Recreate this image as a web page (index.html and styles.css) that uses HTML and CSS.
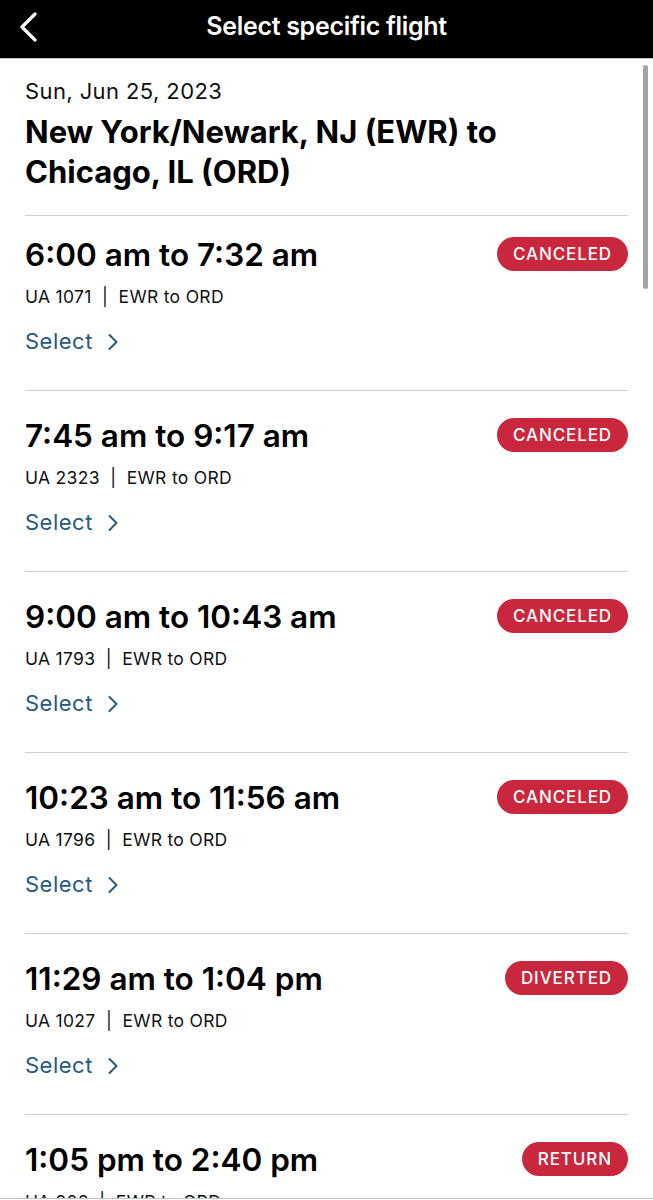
FILE: index.html
```html
<!DOCTYPE html>
<html lang="en">
<head>
<meta charset="utf-8">
<title>Select specific flight</title>
<link rel="stylesheet" href="styles.css">
</head>
<body>
<header class="topbar">
  <button class="back" aria-label="Back">
    <svg width="20" height="30" viewBox="0 0 20 30"><path d="M16 2 L3 15 L16 28" fill="none" stroke="#fff" stroke-width="3.2" stroke-linecap="round" stroke-linejoin="round"/></svg>
  </button>
  <h1 class="title">Select specific flight</h1>
</header>
<main class="content">
  <section class="intro">
    <div class="date">Sun, Jun 25, 2023</div>
    <h2 class="route">New York/Newark, NJ (EWR) to<br>Chicago, IL (ORD)</h2>
  </section>
  <ul class="flights">
    <li class="flight">
      <div class="row-top"><span class="time">6:00 am to 7:32 am</span><span class="badge">CANCELED</span></div>
      <div class="meta">UA 1071 &nbsp;|&nbsp; EWR to ORD</div>
      <a class="select">Select <svg class="chev" width="12" height="18" viewBox="0 0 12 18"><path d="M2.5 2 L9.5 9 L2.5 16" fill="none" stroke="currentColor" stroke-width="2" stroke-linecap="round" stroke-linejoin="round"/></svg></a>
    </li>
    <li class="flight">
      <div class="row-top"><span class="time">7:45 am to 9:17 am</span><span class="badge">CANCELED</span></div>
      <div class="meta">UA 2323 &nbsp;|&nbsp; EWR to ORD</div>
      <a class="select">Select <svg class="chev" width="12" height="18" viewBox="0 0 12 18"><path d="M2.5 2 L9.5 9 L2.5 16" fill="none" stroke="currentColor" stroke-width="2" stroke-linecap="round" stroke-linejoin="round"/></svg></a>
    </li>
    <li class="flight">
      <div class="row-top"><span class="time">9:00 am to 10:43 am</span><span class="badge">CANCELED</span></div>
      <div class="meta">UA 1793 &nbsp;|&nbsp; EWR to ORD</div>
      <a class="select">Select <svg class="chev" width="12" height="18" viewBox="0 0 12 18"><path d="M2.5 2 L9.5 9 L2.5 16" fill="none" stroke="currentColor" stroke-width="2" stroke-linecap="round" stroke-linejoin="round"/></svg></a>
    </li>
    <li class="flight">
      <div class="row-top"><span class="time">10:23 am to 11:56 am</span><span class="badge">CANCELED</span></div>
      <div class="meta">UA 1796 &nbsp;|&nbsp; EWR to ORD</div>
      <a class="select">Select <svg class="chev" width="12" height="18" viewBox="0 0 12 18"><path d="M2.5 2 L9.5 9 L2.5 16" fill="none" stroke="currentColor" stroke-width="2" stroke-linecap="round" stroke-linejoin="round"/></svg></a>
    </li>
    <li class="flight">
      <div class="row-top"><span class="time">11:29 am to 1:04 pm</span><span class="badge">DIVERTED</span></div>
      <div class="meta">UA 1027 &nbsp;|&nbsp; EWR to ORD</div>
      <a class="select">Select <svg class="chev" width="12" height="18" viewBox="0 0 12 18"><path d="M2.5 2 L9.5 9 L2.5 16" fill="none" stroke="currentColor" stroke-width="2" stroke-linecap="round" stroke-linejoin="round"/></svg></a>
    </li>
    <li class="flight">
      <div class="row-top"><span class="time">1:05 pm to 2:40 pm</span><span class="badge">RETURN</span></div>
      <div class="meta">UA 202 &nbsp;|&nbsp; EWR to ORD</div>
      <a class="select">Select <svg class="chev" width="12" height="18" viewBox="0 0 12 18"><path d="M2.5 2 L9.5 9 L2.5 16" fill="none" stroke="currentColor" stroke-width="2" stroke-linecap="round" stroke-linejoin="round"/></svg></a>
    </li>
  </ul>
</main>
<div class="scrollbar"></div>
<div class="bottombar"></div>
</body>
</html>
```
FILE: styles.css
```css
* { box-sizing: border-box; }
html, body { margin: 0; padding: 0; }
body {
  background: #fff;
  color: #000;
  font-family: Inter, "Liberation Sans", sans-serif;
  width: 653px;
  height: 1200px;
  overflow: hidden;
}
.topbar {
  height: 59px;
  background: #000;
  border-bottom: 1px solid #c8c8c8;
  display: flex;
  align-items: center;
  justify-content: center;
  position: relative;
}
.back {
  position: absolute;
  left: 19px;
  top: 11px;
  background: none;
  border: 0;
  padding: 0;
  width: 22px;
  height: 32px;
  display: flex;
  align-items: center;
}
.title {
  margin: 0;
  color: #fff;
  font-size: 25px;
  font-weight: 600;
  letter-spacing: -0.3px;
  line-height: 30px;
  margin-top: -6px;
}
.content {
  padding: 0 25px 0 25px;
}
.intro {
  padding-top: 18px;
  padding-bottom: 23px;
  border-bottom: 1px solid #cfcfcf;
}
.date {
  font-size: 22px;
  line-height: 28px;
  letter-spacing: 0.4px;
  color: #111;
}
.route {
  margin: 7px 0 0;
  font-size: 31px;
  font-weight: 700;
  line-height: 40px;
  letter-spacing: 0;
}
.flights {
  list-style: none;
  margin: 0;
  padding: 0;
}
.flight {
  padding: 27px 0 35px;
  border-bottom: 1px solid #cfcfcf;
  display: flex;
  flex-direction: column;
}
.flight:first-child { padding-top: 21px; }
.row-top {
  display: flex;
  justify-content: space-between;
  align-items: center;
  height: 36px;
}
.time {
  font-size: 31.5px;
  font-weight: 600;
  line-height: 36px;
  letter-spacing: 0;
}
.badge {
  background: #c8273d;
  color: #fff;
  font-size: 17px;
  font-weight: 500;
  letter-spacing: 0.9px;
  height: 34px;
  line-height: 34px;
  padding: 0 16px;
  border-radius: 17px;
  margin-top: -2px;
}
.meta {
  margin-top: 13px;
  font-size: 17.5px;
  line-height: 22px;
  letter-spacing: 0.3px;
  color: #111;
}
.select {
  margin-top: 19px;
  font-size: 22px;
  line-height: 28px;
  letter-spacing: 0.5px;
  color: #265a7c;
  display: flex;
  align-items: center;
  gap: 14px;
}
.chev { margin-top: 1px; }
.scrollbar {
  position: fixed;
  left: 643px;
  top: 65px;
  width: 5px;
  height: 224px;
  border-radius: 3px;
  background: #a3a3a3;
}
.bottombar {
  position: fixed;
  left: 0;
  right: 0;
  bottom: 0;
  height: 2px;
  background: #fff;
  border-top: 1px solid #c4c4c4;
}
```
